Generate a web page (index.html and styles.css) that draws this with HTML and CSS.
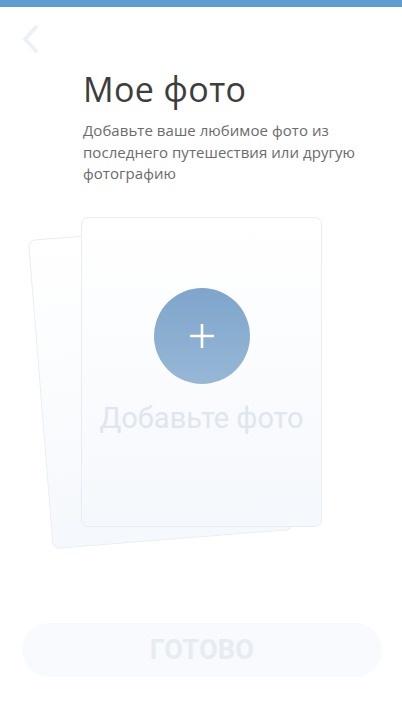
FILE: index.html
```html
<!DOCTYPE html>
<html lang="ru">
<head>
<meta charset="utf-8">
<link rel="stylesheet" href="styles.css">
</head>
<body>
<div class="screen">
  <div class="topbar"></div>
  <div class="header">
    <button class="back" aria-label="Назад">
      <svg width="20" height="30" viewBox="0 0 20 30"><path d="M16 3 L5 15 L16 27" fill="none" stroke="#edf1f7" stroke-width="4" stroke-linecap="round" stroke-linejoin="round"/></svg>
    </button>
  </div>
  <div class="content">
    <h1 class="title">Мое фото</h1>
    <p class="subtitle">Добавьте ваше любимое фото из последнего путешествия или другую фотографию</p>
  </div>
  <div class="stack">
    <div class="card card-back"></div>
    <div class="card card-front">
      <div class="add-circle">
        <svg width="28" height="28" viewBox="0 0 28 28"><path d="M14 2 V26 M2 14 H26" stroke="#fff" stroke-width="2.6"/></svg>
      </div>
      <div class="add-label">Добавьте фото</div>
    </div>
  </div>
  <div class="spacer"></div>
  <button class="done">ГОТОВО</button>
</div>
</body>
</html>
```
FILE: styles.css
```css
* { box-sizing: border-box; }
html, body { margin: 0; padding: 0; background: #fff; }
.screen {
  width: 402px;
  height: 715px;
  display: flex;
  flex-direction: column;
  overflow: hidden;
  font-family: "Open Sans", "Noto Sans", sans-serif;
}
.topbar { height: 7px; background: #5e9cd3; flex: none; }
.header { height: 48px; padding: 16px 0 0 18px; flex: none; }
.back {
  border: 0; background: none; padding: 0; width: 24px; height: 32px;
  display: flex; align-items: center; justify-content: center;
}
.content { padding: 14px 30px 0 83px; }
.title {
  margin: 0;
  font-size: 34px;
  line-height: 40px;
  font-weight: 400;
  color: #3d3d3d;
  letter-spacing: 0.4px;
}
.subtitle {
  margin: 11px 0 0;
  font-size: 15px;
  line-height: 21.5px;
  color: #6b6b6b;
  letter-spacing: 0.05px;
}
.stack {
  position: relative;
  margin: 32px 0 0 81px;
  width: 241px;
  height: 310px;
  flex: none;
}
.card {
  width: 241px;
  height: 310px;
  border: 1.5px solid #e8edf5;
  border-radius: 7px;
  background: linear-gradient(180deg, #ffffff 0%, #f5f8fc 100%);
}
.card-back {
  position: absolute;
  left: -41px;
  top: 13px;
  transform: rotate(-4.6deg);
}
.card-front {
  position: relative;
  display: flex;
  flex-direction: column;
  align-items: center;
  padding-top: 70px;
}
.add-circle {
  width: 96px;
  height: 96px;
  border-radius: 50%;
  background: linear-gradient(180deg, #7ea5cb 0%, #97b7d6 100%);
  box-shadow: 0 0 0 1px rgba(255,255,255,0.6);
  display: flex;
  align-items: center;
  justify-content: center;
}
.add-label {
  margin-top: 14px;
  font-family: Roboto, "Noto Sans", sans-serif;
  font-size: 29px;
  line-height: 40px;
  color: #dfe6f0;
}
.spacer { flex: 1; }
.done {
  flex: none;
  margin: 0 20px 38px 22px;
  height: 54px;
  border: 0;
  border-radius: 27px;
  background: #f8fafd;
  font-family: Roboto, "Noto Sans", sans-serif;
  font-weight: 700;
  font-size: 27px;
  color: #e7ecf3;
  letter-spacing: 0.3px;
}
```
